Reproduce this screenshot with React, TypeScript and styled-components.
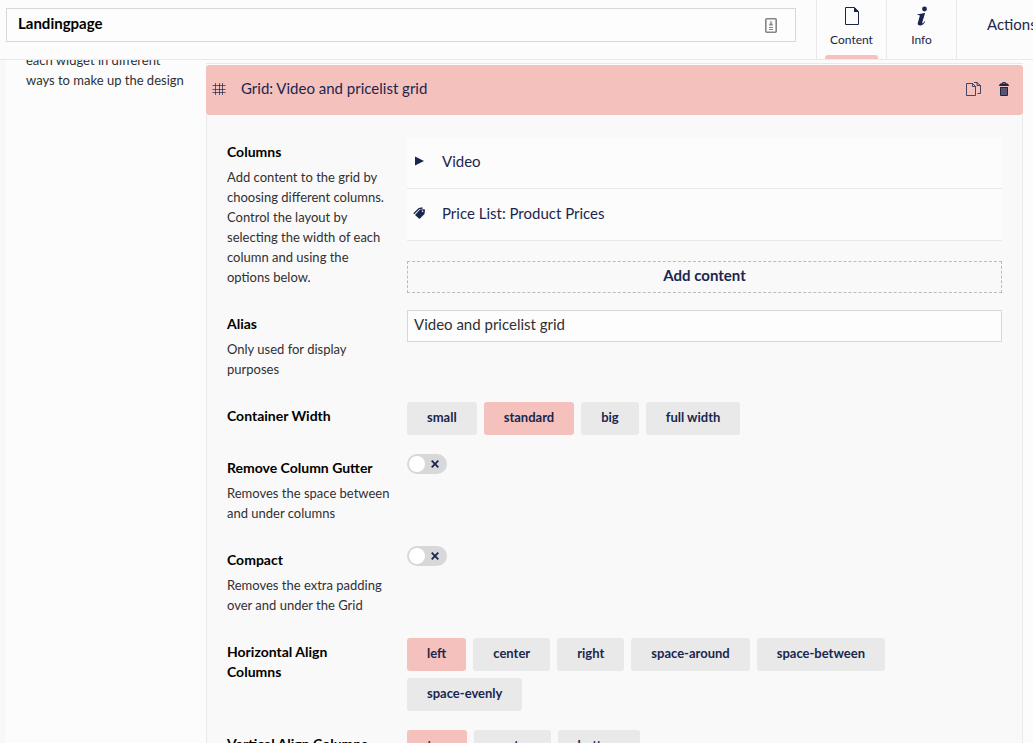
import React, { useState } from "react";
import styled, { createGlobalStyle } from "styled-components";

const navy = "#1b264f";
const pink = "#f5c1bc";

const GlobalStyle = createGlobalStyle`
  *, *::before, *::after { box-sizing: border-box; }
  body {
    margin: 0;
    overflow: hidden;
    background: #fcfcfc;
    color: #303033;
    font-family: Lato, "Liberation Sans", sans-serif;
    font-size: 15px;
    line-height: 20px;
  }
  button, input { font: inherit; color: inherit; }
  button { border: 0; padding: 0; background: none; cursor: pointer; }
`;

const Page = styled.div`
  display: flex;
  flex-direction: column;
  height: 100vh;
  overflow: hidden;
`;

const Header = styled.header`
  display: flex;
  flex: none;
  height: 60px;
  border-bottom: 1px solid #e9e9eb;
  padding-left: 6px;
`;

const NameBox = styled.div`
  display: flex;
  flex: 1;
  align-items: center;
  height: 34px;
  margin: 8px 20px 0 0;
  padding: 0 18px 0 11px;
  border: 1px solid #d8d7d9;
  background: #fdfdfd;
`;

const NameInput = styled.input`
  flex: 1;
  min-width: 0;
  border: 0;
  padding: 0 0 4px;
  outline: 0;
  background: none;
  color: #000;
  font-weight: 700;
`;

const Tabs = styled.nav`
  display: flex;
  flex: none;
`;

const Tab = styled.button<{ $active?: boolean }>`
  display: flex;
  flex-direction: column;
  align-items: center;
  width: 70px;
  padding-top: 6px;
  border-left: 1px solid #e9e9eb;
  color: ${navy};
  font-size: 12px;

  span { margin-top: 4px; }

  &::after {
    content: "";
    width: 53px;
    height: 4px;
    margin-top: auto;
    border-radius: 3px 3px 0 0;
    background: ${(p) => (p.$active ? pink : "transparent")};
  }
`;

const Actions = styled.button`
  flex: none;
  width: 77px;
  padding: 0 0 12px 30px;
  border-left: 1px solid #e9e9eb;
  color: ${navy};
  text-align: left;
  white-space: nowrap;
  overflow: hidden;
`;

const Body = styled.main`
  display: flex;
  flex: 1;
  min-height: 0;
  overflow: hidden;
  padding: 0 10px 0 6px;
  background: linear-gradient(to right, #f9f8f8 6px, #fcfcfc 6px);
`;

const Intro = styled.p`
  flex: none;
  width: 200px;
  margin: -10px 0 0;
  padding: 0 20px;
  font-size: 13px;
`;

const Block = styled.section`
  flex: 1;
  min-width: 0;
  align-self: flex-start;
  margin-top: 3px;
  padding-top: 1px;
  border-top: 1px solid #e9e9eb;
`;

const BlockHeader = styled.div`
  display: flex;
  align-items: center;
  height: 50px;
  padding: 0 14px 2px 6px;
  border-radius: 3px;
  background: ${pink};
  color: ${navy};
`;

const BlockTitle = styled.h2`
  flex: 1;
  margin: 0 0 0 15px;
  padding-bottom: 2px;
  font-size: 15px;
  font-weight: 400;
`;

const IconButton = styled.button`
  display: flex;
  margin-left: 18px;
`;

const BlockBody = styled.div`
  padding: 23px 20px;
  border: 1px solid #e9e9eb;
  border-top: 0;
  background: #faf9f9;
`;

const Row = styled.div`
  display: flex;
  gap: 15px;
  padding-bottom: 12px;
`;

const LabelCell = styled.div`
  flex: none;
  width: 165px;
  padding: 4px 0 11px;
`;

const Label = styled.label`
  display: block;
  margin-bottom: 5px;
  padding-right: 10px;
  color: #000;
  font-size: 14px;
  font-weight: 700;
`;

const Help = styled.p`
  margin: 0;
  font-size: 13px;
`;

const Control = styled.div`
  flex: 1;
  min-width: 0;
`;

const List = styled.ul`
  margin: 0 0 20px;
  padding: 0;
  list-style: none;
`;

const Item = styled.li`
  display: flex;
  align-items: center;
  gap: 17px;
  height: 52px;
  padding: 0 6px 4px;
  border-bottom: 1px solid #e9e9eb;
  background: #fcfcfc;
  color: ${navy};

  &:first-child { height: 51px; }
`;

const AddButton = styled.button`
  display: block;
  width: 100%;
  height: 32px;
  padding-bottom: 4px;
  border: 1px dashed #bbbabf;
  color: ${navy};
  font-weight: 700;
`;

const TextInput = styled.input`
  display: block;
  width: 100%;
  height: 32px;
  padding: 0 6px 4px;
  border: 1px solid #d8d7d9;
  border-radius: 0;
  outline: 0;
  background: #fdfdfd;
`;

const Options = styled.div`
  display: flex;
  flex-wrap: wrap;
  gap: 7px;
  padding-bottom: 7px;
`;

const Option = styled.button<{ $active: boolean }>`
  height: 33px;
  padding: 0 20px 3px;
  border-radius: 3px;
  background: ${(p) => (p.$active ? pink : "#e9e9e9")};
  color: ${navy};
  font-size: 13px;
  font-weight: 700;
`;

const Switch = styled.span`
  position: relative;
  display: flex;
  align-items: center;
  width: 40px;
  height: 20px;
  padding: 0 8px 0 2px;
  border-radius: 10px;
  background: #d8d7d9;

  input {
    position: absolute;
    inset: 0;
    width: 100%;
    height: 100%;
    margin: 0;
    opacity: 0;
    cursor: pointer;
  }

  i {
    width: 16px;
    height: 16px;
    margin-right: auto;
    border-radius: 50%;
    background: #fff;
  }

  &:has(input:checked) {
    flex-direction: row-reverse;
    background: #2bc37c;
    padding: 0 2px 0 8px;
  }
  &:has(input:checked) i { margin: 0 0 0 auto; }
`;

const DocumentIcon = () => (
  <svg width="16" height="20" viewBox="0 0 16 20" fill="none" stroke={navy}>
    <path d="M1.500 1.500h9l4 4v13h-13z" />
    <path d="M10 1v5h5z" fill={navy} stroke="none" />
  </svg>
);

const InfoIcon = () => (
  <svg width="12" height="20" viewBox="0 0 12 20" fill={navy}>
    <circle cx="8.500" cy="3" r="2.400" />
    <path d="M1.500 8.200c2.500-.2 4.500-.7 6.800-1.200h.8L6.300 16.200c-.2.800 0 1.100.4 1 .7-.2 1.400-1.200 1.900-2l.7.4c-1.100 2.300-2.800 4-5.200 4-2 0-2.700-1.100-2.300-2.500L3.700 10.300c.3-1-.3-1.200-2.200-1.200z" />
  </svg>
);

const CardIcon = () => (
  <svg width="12" height="15" viewBox="0 0 12 15" fill="none" stroke="#858585" strokeWidth="1.600">
    <rect x="0.800" y="0.800" width="10.400" height="13.400" rx="1" />
    <path d="M6 3v2M4 9.500h4M4 11.500h4" strokeWidth="1.200" />
    <path d="M4 7.500q0-2.500 2-2.500t2 2.500z" fill="#858585" stroke="none" />
  </svg>
);

const GridIcon = () => (
  <svg width="14" height="14" viewBox="0 0 14 14" fill="none" stroke={navy} strokeOpacity=".7">
    <path d="M3.500 1v12M7.500 1v12M10.500 1v12M.5 3.500h13M.5 7.500h13M.5 10.500h13" />
  </svg>
);

const CopyIcon = () => (
  <svg width="15" height="15" viewBox="0 0 15 15" fill="none" stroke={navy} strokeOpacity=".8">
    <path d="M.5 1.500h6l3 3v9h-9zM6.500 1.500v3h3M8 .5h3l3.500 3v8h-3M11 .5v3h3.500" />
  </svg>
);

const TrashIcon = () => (
  <svg width="10" height="14" viewBox="0 0 10 14" fill={navy}>
    <path d="M2.500 1.500Q3 0 4.500 0h1Q7 0 7.500 1.500h1Q10 2 10 4H0q0-2 1.500-2.500zM3.800 1.500h2.400Q6 1 5.500 1h-1Q4 1 3.800 1.500z" />
    <path d="M1 5h8v8q0 1-1 1H2q-1 0-1-1z" />
    <path d="M3 6v7M5 6v7M7 6v7" stroke={pink} strokeWidth=".6" />
  </svg>
);

const PlayIcon = () => (
  <svg width="12" height="12" viewBox="0 0 12 12" fill={navy}>
    <path d="M2 1.500l9 4.500-9 4.500z" />
  </svg>
);

const TagsIcon = () => (
  <svg width="12" height="12" viewBox="0 0 12 12" fill={navy}>
    <path d="M7 2.500L11 2.200q1 0 1 1L11.500 7 6.500 12 2 8z" />
    <path d="M.8 6.800L6 1.500 9.500 1" fill="none" stroke={navy} strokeWidth="1.300" />
    <circle cx="9.600" cy="4.300" r=".8" fill="#fcfcfc" />
  </svg>
);

const CrossIcon = () => (
  <svg width="8" height="8" viewBox="0 0 8 8" stroke={navy} strokeWidth="1.800">
    <path d="M.7.7l6.600 6.600M7.300.7L.7 7.300" />
  </svg>
);

type FieldProps = {
  id: string;
  label: string;
  help?: string;
  group?: boolean;
  children: React.ReactNode;
};

const Field = ({ id, label, help, group, children }: FieldProps) => (
  <Row role={group ? "group" : undefined} aria-labelledby={group ? `${id}-label` : undefined}>
    <LabelCell>
      <Label as={group ? "div" : "label"} id={`${id}-label`} htmlFor={group ? undefined : id}>
        {label}
      </Label>
      {help && <Help>{help}</Help>}
    </LabelCell>
    <Control>{children}</Control>
  </Row>
);

const Choice = ({ options, initial }: { options: string[]; initial: string }) => {
  const [value, setValue] = useState(initial);
  return (
    <Options>
      {options.map((o) => (
        <Option key={o} type="button" $active={o === value} aria-pressed={o === value} onClick={() => setValue(o)}>
          {o}
        </Option>
      ))}
    </Options>
  );
};

const Toggle = ({ id }: { id: string }) => (
  <Switch>
    <i />
    <CrossIcon />
    <input id={id} type="checkbox" />
  </Switch>
);

export default function App() {
  return (
    <Page>
      <GlobalStyle />
      <Header>
        <NameBox>
          <NameInput aria-label="Name" defaultValue="Landingpage" />
          <CardIcon />
        </NameBox>
        <Tabs>
          <Tab type="button" $active>
            <DocumentIcon />
            <span>Content</span>
          </Tab>
          <Tab type="button">
            <InfoIcon />
            <span>Info</span>
          </Tab>
        </Tabs>
        <Actions type="button">Actions</Actions>
      </Header>
      <Body>
        <Intro>each widget in different ways to make up the design</Intro>
        <Block>
          <BlockHeader>
            <GridIcon />
            <BlockTitle>Grid: Video and pricelist grid</BlockTitle>
            <IconButton type="button" aria-label="Copy">
              <CopyIcon />
            </IconButton>
            <IconButton type="button" aria-label="Delete">
              <TrashIcon />
            </IconButton>
          </BlockHeader>
          <BlockBody>
            <Field
              id="columns"
              group
              label="Columns"
              help="Add content to the grid by choosing different columns. Control the layout by selecting the width of each column and using the options below."
            >
              <List>
                <Item>
                  <PlayIcon />
                  Video
                </Item>
                <Item>
                  <TagsIcon />
                  Price List: Product Prices
                </Item>
              </List>
              <AddButton type="button">Add content</AddButton>
            </Field>
            <Field id="alias" label="Alias" help="Only used for display purposes">
              <TextInput id="alias" defaultValue="Video and pricelist grid" />
            </Field>
            <Field id="width" group label="Container Width">
              <Choice options={["small", "standard", "big", "full width"]} initial="standard" />
            </Field>
            <Field id="gutter" label="Remove Column Gutter" help="Removes the space between and under columns">
              <Toggle id="gutter" />
            </Field>
            <Field id="compact" label="Compact" help="Removes the extra padding over and under the Grid">
              <Toggle id="compact" />
            </Field>
            <Field id="horizontal" group label="Horizontal Align Columns">
              <Choice
                options={["left", "center", "right", "space-around", "space-between", "space-evenly"]}
                initial="left"
              />
            </Field>
            <Field id="vertical" group label="Vertical Align Columns">
              <Choice options={["top", "center", "bottom"]} initial="top" />
            </Field>
          </BlockBody>
        </Block>
      </Body>
    </Page>
  );
}
